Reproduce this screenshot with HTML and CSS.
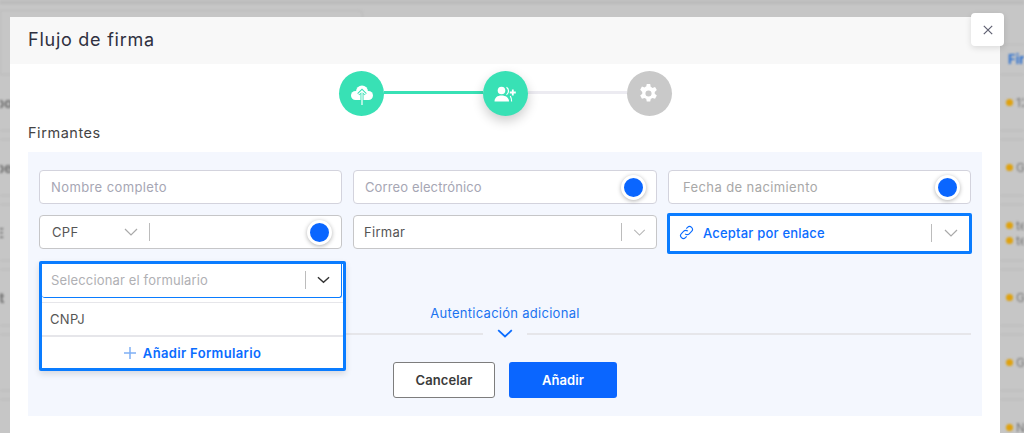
FILE: index.html
```html
<!DOCTYPE html>
<html lang="es">
<head>
<meta charset="utf-8">
<title>Flujo de firma</title>
<link rel="stylesheet" href="styles.css">
</head>
<body>
<div class="backdrop">
  <div class="bg-top"></div>
  <div class="bg-cols">
    <div class="bg-left">
      <div class="bg-card"></div>
      <div class="bg-row"><b>po</b></div>
      <div class="bg-row"><b>pe</b></div>
      <div class="bg-row"><b>E</b></div>
      <div class="bg-row"><b>it</b></div>
      <div class="bg-row"></div>
    </div>
    <div class="bg-right">
      <div class="bg-head">Fir</div>
      <div class="bg-row"><p><i></i>12</p></div>
      <div class="bg-row"><p><i></i>G</p></div>
      <div class="bg-row"><p><i></i>te</p><p><i></i>te</p></div>
      <div class="bg-row"><p><i></i>G</p></div>
      <div class="bg-row"><p><i></i>G</p></div>
      <div class="bg-row"><p><i></i>N</p></div>
    </div>
  </div>
</div>

<main class="modal">
  <button class="close" aria-label="Cerrar">
    <svg width="10" height="10" viewBox="0 0 10 10"><path d="M.8.8l8.400 8.400M9.200.8L.8 9.200" stroke="#5f6072" stroke-width="1.200" fill="none"/></svg>
  </button>
  <header class="modal-head"><h1>Flujo de firma</h1></header>

  <div class="steps">
    <div class="step on">
      <svg width="24" height="24" viewBox="0 0 24 24"><circle cx="5.500" cy="13.500" r="4.500" fill="#fff"/><circle cx="12" cy="9.500" r="6" fill="#fff"/><circle cx="18.500" cy="13.500" r="4.500" fill="#fff"/><rect x="5.500" y="11" width="13" height="7" fill="#fff"/><path d="M12 19V8.500M8.300 12.200L12 8.500l3.700 3.700" stroke="#38e1b5" stroke-width="3" fill="none"/><path d="M12 23V8.800M8.400 12.400L12 8.800l3.600 3.600" stroke="#fff" stroke-width="1.200" fill="none"/></svg>
    </div>
    <span class="link on"></span>
    <div class="step on current">
      <svg width="24" height="24" viewBox="0 0 24 24"><circle cx="7.500" cy="8.500" r="3.800" fill="#fff"/><path d="M.5 19.500c0-3.900 2.800-6 7-6s7.500 2.100 7.500 6z" fill="#fff"/><path d="M12.500 5.200c1.300.9 2 2.200 2 3.800s-.7 2.900-2 3.800M16.300 14c.9 1.500 1.300 3.300 1.300 5.500" stroke="#fff" stroke-width="1.200" fill="none"/><path d="M18.800 7.500v6M15.800 10.500h6" stroke="#fff" stroke-width="1.800" fill="none"/></svg>
    </div>
    <span class="link"></span>
    <div class="step off">
      <svg class="gear" width="21" height="21" viewBox="0 0 24 24"><path fill="#fff" fill-rule="evenodd" d="M14 1.500l.6 3.100c.7.2 1.300.6 1.900 1l3-1 2 3.500-2.400 2.100c.1.7.1 1.400 0 2.200l2.400 2-2 3.600-3-1c-.6.4-1.200.8-1.900 1l-.6 3h-4l-.6-3c-.7-.2-1.300-.6-1.900-1l-3 1-2-3.600 2.400-2c-.1-.8-.1-1.500 0-2.200L2.500 7.600l2-3.500 3 1c.6-.4 1.200-.8 1.900-1l.6-3.100h4zM12 8.500a3.500 3.500 0 1 0 0 7 3.500 3.500 0 0 0 0-7z"/></svg>
    </div>
  </div>

  <h2 class="section">Firmantes</h2>

  <section class="panel">
    <div class="fields">
      <div class="field"><span class="ph">Nombre completo</span></div>
      <div class="field"><span class="ph ph-tight">Correo electrónico</span><span class="dot"></span></div>
      <div class="field field-date"><span class="ph ph-grey">Fecha de nacimiento</span><span class="dot"></span></div>

      <div class="field field-doc">
        <span class="val doc">CPF</span>
        <svg class="chev" width="14" height="8" viewBox="0 0 14 8"><path d="M1 1l6 6 6-6" stroke="#a9a9a9" stroke-width="1.200" fill="none"/></svg>
        <span class="sep"></span>
        <span class="grow"></span>
        <span class="dot"></span>
      </div>
      <div class="field field-sign">
        <span class="val grow">Firmar</span>
        <span class="sep"></span>
        <svg class="chev chev-end" width="13" height="7" viewBox="0 0 14 8"><path d="M1 1l6 6 6-6" stroke="#b5b5b5" stroke-width="1.200" fill="none"/></svg>
      </div>
      <div class="field field-link">
        <svg class="link-icon" width="15" height="15" viewBox="0 0 16 16"><path d="M6.600 9.400a3 3 0 0 0 4.300 0l2.500-2.500a3 3 0 0 0-4.300-4.300L7.800 3.900M9.400 6.600a3 3 0 0 0-4.300 0L2.600 9.100a3 3 0 0 0 4.300 4.300l1.300-1.300" stroke="#0a6cff" stroke-width="1.200" fill="none"/></svg>
        <span class="link-text grow">Aceptar por enlace</span>
        <span class="sep"></span>
        <svg class="chev chev-end2" width="14" height="8" viewBox="0 0 14 8"><path d="M1 1l6 6 6-6" stroke="#a9a9a9" stroke-width="1.200" fill="none"/></svg>
      </div>
    </div>

    <div class="extra">
      <a class="extra-label">Autenticación adicional</a>
      <div class="extra-rule">
        <svg width="16" height="9" viewBox="0 0 16 9"><path d="M1.200 1.200L8 7.500l6.800-6.300" stroke="#0a6cff" stroke-width="1.800" fill="none"/></svg>
      </div>
    </div>

    <div class="actions">
      <button class="btn btn-ghost">Cancelar</button>
      <button class="btn btn-primary">Añadir</button>
    </div>

    <div class="dropdown">
      <div class="dd-select">
        <span class="dd-ph grow">Seleccionar el formulario</span>
        <span class="sep"></span>
        <svg class="dd-chev" width="13" height="8" viewBox="0 0 14 8"><path d="M1 1l6 5.500L13 1" stroke="#333" stroke-width="1.500" fill="none"/></svg>
      </div>
      <div class="dd-item">CNPJ</div>
      <div class="dd-add">
        <svg width="12" height="12" viewBox="0 0 12 12"><path d="M6 0v12M0 6h12" stroke="#7fb0f5" stroke-width="1.500" fill="none"/></svg>
        <span>Añadir Formulario</span>
      </div>
    </div>
  </section>
</main>
</body>
</html>
```
FILE: styles.css
```css
* { box-sizing: border-box; }
html, body { margin: 0; height: 433px; overflow: hidden; }
body { background: #c6c6c6; font-family: Inter, "Liberation Sans", sans-serif; position: relative; color: #333; }
h1, h2, p { margin: 0; font-weight: 400; }

/* blurred page behind the dialog */
.backdrop { height: 433px; overflow: hidden; filter: blur(.8px); color: #666; }
.bg-top { height: 4px; background: #bdbdbd; border-bottom: 1px solid #b6b6b6; }
.bg-cols { display: flex; justify-content: space-between; }
.bg-left { width: 363px; }
.bg-right { width: 24px; }
.bg-card { height: 65px; margin-top: 6px; border: 1px solid #bbb; border-bottom-color: #b9b9b9; border-radius: 0 4px 0 0; }
.bg-row { height: 65px; border-bottom: 1px solid #b9b9b9; background: linear-gradient(#b9b9b9, #b9b9b9) no-repeat 0 55px / 100% 1px; }
.bg-left .bg-row { display: flex; align-items: center; padding: 0 0 9px; font-size: 13px; white-space: nowrap; }
.bg-left .bg-row b { color: #6d6d6d; margin-left: -4px; }
.bg-head { height: 71px; margin-top: 40px; padding: 6px 0 0 8px; border-top: 1px solid #bcbcbc; border-bottom: 1px solid #b9b9b9; color: #2a6fd0; font-weight: 700; font-size: 13px; height: 31px; overflow: hidden; }
.bg-right .bg-row { display: flex; flex-direction: column; justify-content: center; gap: 4px; padding: 0 0 9px 6px; overflow: hidden; }
.bg-right p { display: flex; align-items: center; gap: 3px; font-size: 12px; line-height: 11px; color: #777; white-space: nowrap; }
.bg-right i { width: 7px; height: 7px; border-radius: 50%; background: #dfa10d; flex: none; }

/* dialog */
.modal { position: absolute; left: 10px; top: 17px; width: 990px; height: 416px; background: #fff; }
.close { position: absolute; left: 961px; top: -4px; width: 33px; height: 33px; background: #fff; border: 0; border-radius: 4px; box-shadow: 0 2px 6px rgba(0,0,0,.12); display: flex; align-items: center; justify-content: center; padding: 0; }
.modal-head { height: 47px; background: #f8f8f8; padding: 12px 18px 0; }
h1 { font-size: 18px; line-height: 22px; color: #2f3040; letter-spacing: .75px; }

.steps { display: flex; align-items: center; padding: 7px 0 0 329px; }
.step { width: 45px; height: 45px; border-radius: 50%; display: flex; align-items: center; justify-content: center; flex: none; position: relative; z-index: 1; }
.step.on { background: #38e1b5; }
.step.current { box-shadow: 0 5px 12px rgba(0,0,0,.2); }
.step.off { background: #c9c9c9; }
.gear { margin-right: 2px; }
.link { width: 99px; height: 3px; background: #ecebf1; margin-top: -2px; }
.link.on { background: #38e1b5; }

.section { font-size: 14.5px; line-height: 17px; color: #444; padding: 8px 18px 0; height: 36px; letter-spacing: .55px; }

.panel { position: relative; margin: 0 18px; height: 264px; background: #f4f7fe; padding: 18px 11px 0; }
.fields { display: grid; grid-template-columns: 303px 304px 303px; column-gap: 11px; row-gap: 11px; grid-auto-rows: 34px; }
.field { background: #fff; border: 1px solid #d3d3dd; border-radius: 4px; display: flex; align-items: center; padding: 0 11px; font-size: 13px; }
.ph { color: #a6a6b4; flex: 1; letter-spacing: .4px; }
.ph-tight { letter-spacing: .12px; }
.ph-grey { color: #a8a8a8; padding-left: 3px; }
.val { color: #555; letter-spacing: .3px; }
.grow { flex: 1; }
.dot { width: 25px; height: 25px; border-radius: 50%; background: #0a66ff; border: 3px solid #fff; box-shadow: 0 1px 4px rgba(0,0,0,.3); flex: none; margin-right: -1px; }
.field-doc, .field-sign { border-color: #c6c6c8; }
.field-doc { padding-left: 12px; padding-right: 10px; }
.field-sign { padding-left: 10px; }
.doc { width: 72px; flex: none; }
.chev { flex: none; }
.sep { width: 1px; height: 18px; background: #bcbcbc; flex: none; }
.field-doc .sep { margin-left: 11px; }
.chev-end { margin-left: 11px; margin-right: -1px; }
.field-link { margin: -2px -1px -5px; height: 41px; border: 3px solid #0a7cff; border-radius: 2px; padding: 0 11px 2px 9px; }
.link-icon { flex: none; margin-right: 9px; }
.link-text { color: #0a6cff; font-size: 13px; font-weight: 500; letter-spacing: .2px; }
.chev-end2 { margin-left: 12px; }

.extra { margin-top: 56px; text-align: center; }
.extra-label { display: block; color: #1a73f0; font-size: 13px; line-height: 16px; letter-spacing: .28px; }
.extra-rule { position: relative; height: 3px; margin-top: 12px; background: linear-gradient(#e6e6ea, #e6e6ea) no-repeat 0 0 / 444px 2px, linear-gradient(#e6e6ea, #e6e6ea) no-repeat right 0 top 0 / 444px 2px; display: flex; justify-content: center; }
.extra-rule svg { display: block; margin-top: -4px; flex: none; }

.actions { display: flex; justify-content: center; gap: 14px; margin-top: 26px; }
.btn { height: 36px; border-radius: 3px; font-family: inherit; font-size: 13px; font-weight: 600; padding: 0; letter-spacing: .1px; }
.btn-ghost { width: 102px; background: #fff; border: 1px solid #7d7d7d; color: #3a3a3a; }
.btn-primary { width: 108px; background: #0a66ff; border: 0; color: #fff; }

.dropdown { position: absolute; left: 11px; top: 109px; width: 307px; height: 110px; border: 3px solid #0a7cff; background: #fff; border-radius: 2px; box-shadow: 0 3px 6px rgba(0,0,0,.12); }
.dd-select { height: 34px; margin-right: 1px; border: 1px solid #0a7cff; border-top: 0; border-left: 0; border-radius: 0 0 3px 3px; display: flex; align-items: center; padding: 0 11px 2px 9px; font-size: 13px; }
.dd-ph { color: #b0b0b4; letter-spacing: .15px; }
.dd-chev { margin-left: 11px; flex: none; }
.dd-item { height: 35px; margin-top: 4px; border-top: 1px solid #e6e6ea; border-bottom: 2px solid #e6e6ea; padding-left: 8px; display: flex; align-items: center; font-size: 13px; color: #555; letter-spacing: .3px; }
.dd-add { height: 32px; display: flex; align-items: center; justify-content: center; gap: 7px; color: #0a6cff; font-size: 13px; font-weight: 600; letter-spacing: .35px; }
```
